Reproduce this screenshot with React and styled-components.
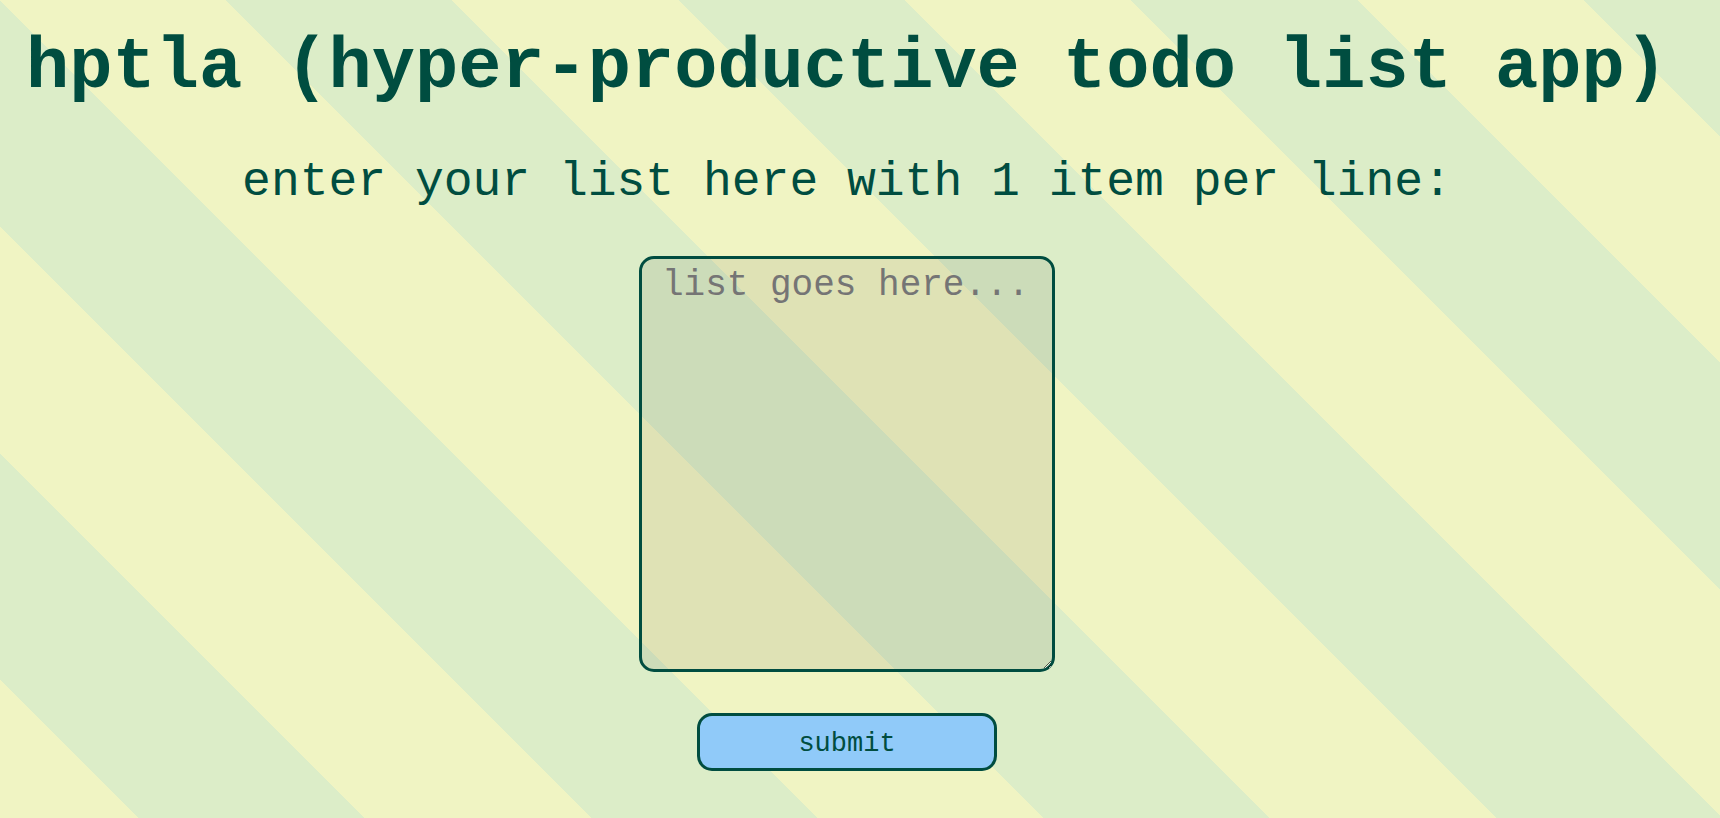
import React from "react";
import styled, { createGlobalStyle } from "styled-components";

const GlobalStyle = createGlobalStyle`
	html, body {
		margin: 0;
		padding: 0;
	}
	body {
		font-family: "Liberation Mono", "DejaVu Sans Mono", monospace;
		color: #004d40;
	}
`;

export default function App() {
	return (
		<Page>
			<GlobalStyle />
			<Title>hptla (hyper-productive todo list app)</Title>
			<Prompt>enter your list here with 1 item per line:</Prompt>
			<ListInput placeholder="list goes here..." />
			<SubmitButton type="button">submit</SubmitButton>
		</Page>
	);
}

const Page = styled.div`
	display: flex;
	flex-direction: column;
	align-items: center;
	min-height: 100vh;
	box-sizing: border-box;
	padding: 32px 26px 0 0;
	background: repeating-linear-gradient(
		45deg,
		#dcedc8 98px,
		#dcedc8 258px,
		#f0f4c3 258px,
		#f0f4c3 418px
	);
`;

const Title = styled.h1`
	margin: 0;
	font-family: "Liberation Mono", monospace;
	font-size: 72px;
	line-height: 72px;
	font-weight: bold;
	white-space: nowrap;
`;

const Prompt = styled.h2`
	margin: 54px 0 0;
	font-family: "Liberation Mono", monospace;
	font-size: 48px;
	line-height: 48px;
	font-weight: normal;
	white-space: nowrap;
`;

const ListInput = styled.textarea`
	box-sizing: border-box;
	width: 416px;
	height: 416px;
	margin-top: 50px;
	padding: 6px 20px;
	border: 3px solid #004d40;
	border-radius: 15px;
	background: rgba(0, 0, 0, 0.07);
	color: #004d40;
	font-family: "Liberation Mono", monospace;
	font-size: 36px;
	outline: none;
	&::placeholder {
		color: #757575;
	}
`;

const SubmitButton = styled.button`
	box-sizing: border-box;
	width: 300px;
	height: 58px;
	margin-top: 41px;
	padding: 3px 0 0;
	border: 3px solid #004d40;
	border-radius: 15px;
	background: #90caf9;
	color: #004d40;
	font-family: "Liberation Mono", monospace;
	font-size: 27px;
	cursor: pointer;
`;
